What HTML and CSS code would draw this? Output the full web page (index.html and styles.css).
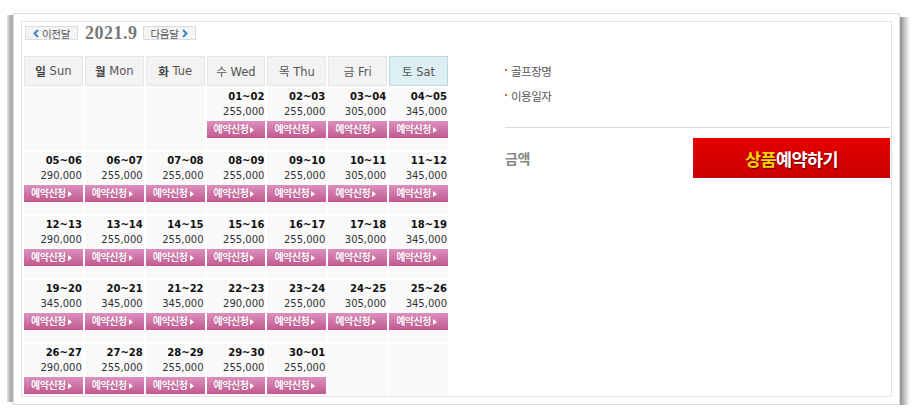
FILE: index.html
```html
<!DOCTYPE html>
<html lang="ko">
<head>
<meta charset="utf-8">
<title>예약</title>
<link rel="stylesheet" href="styles.css">
</head>
<body>
<div class="page">
  <div class="shadow-l"></div>
  <div class="box">
    <div class="inner">
      <div class="cal">
        <div class="nav">
          <a class="nav-btn prev"><svg class="chev" width="6" height="9" viewBox="0 0 6 9"><path d="M5 1 L1.5 4.5 L5 8" fill="none" stroke="#3f86cc" stroke-width="2"/></svg>이전달</a>
          <span class="month">2021.9</span>
          <a class="nav-btn next">다음달<svg class="chev" width="6" height="9" viewBox="0 0 6 9"><path d="M1 1 L4.5 4.5 L1 8" fill="none" stroke="#3f86cc" stroke-width="2"/></svg></a>
        </div>
        <div class="grid">
          <div class="hd"><b>일</b> Sun</div>
          <div class="hd"><b>월</b> Mon</div>
          <div class="hd"><b>화</b> Tue</div>
          <div class="hd">수 Wed</div>
          <div class="hd">목 Thu</div>
          <div class="hd">금 Fri</div>
          <div class="hd sat">토 Sat</div>

          <div class="cell"></div>
          <div class="cell"></div>
          <div class="cell"></div>
          <div class="cell"><div class="d">01~02</div><div class="p">255,000</div><a class="rb">예약신청<i></i></a></div>
          <div class="cell"><div class="d">02~03</div><div class="p">255,000</div><a class="rb">예약신청<i></i></a></div>
          <div class="cell"><div class="d">03~04</div><div class="p">305,000</div><a class="rb">예약신청<i></i></a></div>
          <div class="cell"><div class="d">04~05</div><div class="p">345,000</div><a class="rb">예약신청<i></i></a></div>

          <div class="cell"><div class="d">05~06</div><div class="p">290,000</div><a class="rb">예약신청<i></i></a></div>
          <div class="cell"><div class="d">06~07</div><div class="p">255,000</div><a class="rb">예약신청<i></i></a></div>
          <div class="cell"><div class="d">07~08</div><div class="p">255,000</div><a class="rb">예약신청<i></i></a></div>
          <div class="cell"><div class="d">08~09</div><div class="p">255,000</div><a class="rb">예약신청<i></i></a></div>
          <div class="cell"><div class="d">09~10</div><div class="p">255,000</div><a class="rb">예약신청<i></i></a></div>
          <div class="cell"><div class="d">10~11</div><div class="p">305,000</div><a class="rb">예약신청<i></i></a></div>
          <div class="cell"><div class="d">11~12</div><div class="p">345,000</div><a class="rb">예약신청<i></i></a></div>

          <div class="cell"><div class="d">12~13</div><div class="p">290,000</div><a class="rb">예약신청<i></i></a></div>
          <div class="cell"><div class="d">13~14</div><div class="p">255,000</div><a class="rb">예약신청<i></i></a></div>
          <div class="cell"><div class="d">14~15</div><div class="p">255,000</div><a class="rb">예약신청<i></i></a></div>
          <div class="cell"><div class="d">15~16</div><div class="p">255,000</div><a class="rb">예약신청<i></i></a></div>
          <div class="cell"><div class="d">16~17</div><div class="p">255,000</div><a class="rb">예약신청<i></i></a></div>
          <div class="cell"><div class="d">17~18</div><div class="p">305,000</div><a class="rb">예약신청<i></i></a></div>
          <div class="cell"><div class="d">18~19</div><div class="p">345,000</div><a class="rb">예약신청<i></i></a></div>

          <div class="cell"><div class="d">19~20</div><div class="p">345,000</div><a class="rb">예약신청<i></i></a></div>
          <div class="cell"><div class="d">20~21</div><div class="p">345,000</div><a class="rb">예약신청<i></i></a></div>
          <div class="cell"><div class="d">21~22</div><div class="p">345,000</div><a class="rb">예약신청<i></i></a></div>
          <div class="cell"><div class="d">22~23</div><div class="p">290,000</div><a class="rb">예약신청<i></i></a></div>
          <div class="cell"><div class="d">23~24</div><div class="p">255,000</div><a class="rb">예약신청<i></i></a></div>
          <div class="cell"><div class="d">24~25</div><div class="p">305,000</div><a class="rb">예약신청<i></i></a></div>
          <div class="cell"><div class="d">25~26</div><div class="p">345,000</div><a class="rb">예약신청<i></i></a></div>

          <div class="cell"><div class="d">26~27</div><div class="p">290,000</div><a class="rb">예약신청<i></i></a></div>
          <div class="cell"><div class="d">27~28</div><div class="p">255,000</div><a class="rb">예약신청<i></i></a></div>
          <div class="cell"><div class="d">28~29</div><div class="p">255,000</div><a class="rb">예약신청<i></i></a></div>
          <div class="cell"><div class="d">29~30</div><div class="p">255,000</div><a class="rb">예약신청<i></i></a></div>
          <div class="cell"><div class="d">30~01</div><div class="p">255,000</div><a class="rb">예약신청<i></i></a></div>
          <div class="cell"></div>
          <div class="cell"></div>
        </div>
      </div>
      <div class="side">
        <ul class="info">
          <li>골프장명</li>
          <li>이용일자</li>
        </ul>
        <div class="total">
          <span class="amount">금액</span>
          <a class="book"><span class="hl">상품</span>예약하기</a>
        </div>
      </div>
    </div>
  </div>
  <div class="shadow-r"></div>
</div>
</body>
</html>
```

FILE: styles.css
```css
html, body {
  margin: 0;
  padding: 0;
  background: #fff;
}
body {
  font-family: "DejaVu Sans", "Noto Sans CJK KR", sans-serif;
  color: #333;
}
.page {
  display: flex;
  align-items: stretch;
  padding: 13px 0 0 7px;
}
.shadow-l {
  width: 6px;
  margin: 2px 0 3px;
  background: linear-gradient(to right, #e2e2e2, #a6a6a6 70%, #b8b8b8);
}
.shadow-r {
  width: 10px;
  margin: 4px 0 -2px;
  background: linear-gradient(to right, #8f8f8f, #b0b0b0 30%, #e0e0e0 70%, #fff);
}
.box {
  width: 887px;
  height: 392px;
  box-sizing: border-box;
  border: 1px solid #dcdcdc;
  padding: 7px;
  display: flex;
  flex-direction: column;
  background: #fff;
}
.inner {
  flex: 1;
  min-height: 0;
  overflow: hidden;
  border: 1px solid #e4e4e4;
  padding: 4px 1px 0 2px;
  display: flex;
  gap: 57px;
}
.cal {
  width: 424px;
  flex: none;
}
.nav {
  display: flex;
  align-items: center;
  height: 14px;
  padding-left: 1px;
}
.nav-btn {
  box-sizing: border-box;
  width: 53px;
  height: 14px;
  border: 1px solid #dcdcdc;
  background: #f4f4f4;
  display: flex;
  align-items: center;
  justify-content: center;
  gap: 3px;
  font-size: 10.5px;
  color: #555;
  letter-spacing: -0.3px;
}
.chev { display: block; }
.month {
  font-family: "Liberation Serif", serif;
  font-weight: bold;
  font-size: 18px;
  letter-spacing: 0.5px;
  color: #777;
  margin: 0 5px 0 7px;
  line-height: 14px;
}
.grid {
  margin-top: 16px;
  display: grid;
  grid-template-columns: repeat(7, 1fr);
  grid-template-rows: 30px repeat(5, 62px);
  gap: 2px;
}
.hd {
  box-sizing: border-box;
  border: 1px solid #e6e6e6;
  background: #f3f3f3;
  display: flex;
  align-items: center;
  justify-content: center;
  font-size: 11.5px;
  color: #555;
  white-space: pre;
}
.hd b { font-weight: bold; color: #444; }
.hd.sat {
  background: #deeff4;
  border-color: #b8d9e5;
}
.cell {
  background: #f9f9f9;
  padding-top: 2px;
  text-align: right;
  display: flex;
  flex-direction: column;
}
.d {
  font-size: 10px;
  font-weight: bold;
  line-height: 14px;
  color: #111;
  padding-right: 1px;
}
.p {
  font-size: 10px;
  line-height: 16px;
  color: #333;
  padding-right: 1px;
}
.rb {
  margin-top: 1px;
  height: 17px;
  background: linear-gradient(to bottom, #dc90bf, #c3598f);
  color: #fff;
  font-weight: bold;
  font-size: 10px;
  letter-spacing: -0.5px;
  line-height: 17px;
  text-align: left;
  padding-left: 7px;
  display: flex;
  align-items: center;
  gap: 2px;
  text-shadow: 0 0 1px rgba(120, 20, 70, 0.5);
}
.rb i {
  display: block;
  width: 0;
  height: 0;
  border-left: 4px solid #fff;
  border-top: 3.5px solid transparent;
  border-bottom: 3.5px solid transparent;
}
.side {
  width: 385px;
  flex: none;
}
.info {
  list-style: none;
  margin: 34px 0 0;
  padding: 0 0 17px;
  border-bottom: 1px solid #dadada;
}
.info li {
  position: relative;
  line-height: 25px;
  font-size: 11.5px;
  letter-spacing: -0.5px;
  color: #555;
  padding-left: 6px;
}
.info li::before {
  content: "";
  position: absolute;
  left: 0;
  top: 9px;
  width: 2px;
  height: 2px;
  background: #f26a1b;
}
.total {
  display: flex;
  align-items: center;
  justify-content: space-between;
  padding-top: 10px;
}
.amount {
  font-size: 14px;
  font-weight: bold;
  color: #888;
  letter-spacing: -0.5px;
}
.book {
  width: 197px;
  height: 40px;
  background: linear-gradient(to bottom, #e60000, #c90000);
  display: flex;
  align-items: center;
  justify-content: center;
  color: #fff;
  font-size: 17.5px;
  font-weight: bold;
  letter-spacing: -0.6px;
  text-shadow: 1px 1px 1px #5a0000;
}
.book .hl { color: #ffd200; }
```
